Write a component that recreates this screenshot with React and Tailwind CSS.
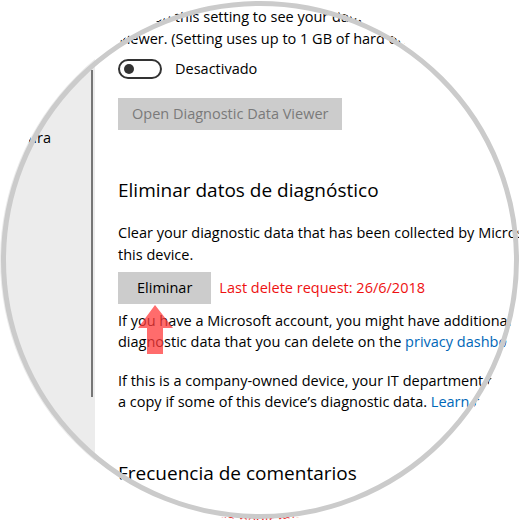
import React from 'react';

const font = { fontFamily: '"Open Sans", "Noto Sans", sans-serif' };

function Toggle() {
  return (
    <div className="flex items-center w-[44px] h-[20px] rounded-full border-2 border-[#333333]">
      <div className="ml-[4px] w-[10px] h-[10px] rounded-full bg-[#333333]" />
    </div>
  );
}

function GrayButton({ children, muted }) {
  return (
    <div
      className={`inline-flex items-center h-[32px] bg-[#cccccc] ${
        muted ? 'text-[#7a7a7a] px-[14px]' : 'text-black px-[19px]'
      }`}
    >
      {children}
    </div>
  );
}

export default function App() {
  return (
    <div className="w-[520px] h-[520px] bg-white relative" style={font}>
      <div className="w-[520px] h-[520px] rounded-full overflow-hidden flex bg-white">
        {/* sidebar */}
        <div className="w-[95px] shrink-0 bg-[#ececec] flex">
          <div className="w-[91px] pt-[127px] flex justify-end pr-[40px] overflow-hidden">
            <span className="whitespace-nowrap text-[14.5px] leading-[22px] text-black">Voz, entrada manuscrita y escritura</span>
          </div>
          <div className="w-[2px] mt-[70px] h-[327px] bg-[#767676]" />
        </div>

        {/* main */}
        <div className="flex-1 pl-[23px] pt-[6px] text-[14.5px] text-black whitespace-nowrap">
          <div className="leading-[22px]">
            <p>Turn on this setting to see your data in the Diagnostic Data</p>
            <p>Viewer. (Setting uses up to 1 GB of hard drive space.)</p>
          </div>

          <div className="mt-[9px] flex items-center gap-[13px] h-[20px]">
            <Toggle />
            <span>Desactivado</span>
          </div>

          <div className="mt-[19px]">
            <GrayButton muted>Open Diagnostic Data Viewer</GrayButton>
          </div>

          <h2 className="mt-[46px] text-[19px] leading-[28px]">Eliminar datos de diagnóstico</h2>

          <div className="mt-[18px] leading-[22px]">
            <p>Clear your diagnostic data that has been collected by Microsoft about</p>
            <p>this device.</p>
          </div>

          <div className="mt-[6px] flex items-center gap-[8px]">
            <GrayButton>Eliminar</GrayButton>
            <span className="text-[#ee1111]">Last delete request: 26/6/2018</span>
          </div>

          <div className="mt-[6px] leading-[21px]">
            <p>If you have a Microsoft account, you might have additional</p>
            <p>
              diagnostic data that you can delete on the{' '}
              <span className="text-[#0067b8]">privacy dashboard</span>.
            </p>
          </div>

          <div className="mt-[18px] leading-[21px]">
            <p>If this is a company-owned device, your IT department can delete</p>
            <p>
              a copy if some of this device’s diagnostic data.{' '}
              <span className="text-[#0067b8]">Learn more</span>
            </p>
          </div>

          <h2 className="mt-[47px] text-[19px] leading-[28px]">Frecuencia de comentarios</h2>
          <p className="mt-[22px] text-[#ee1111]">Windows debería pedir mis comentarios</p>
        </div>
      </div>

      {/* red arrow pointing at the button */}
      <svg className="absolute left-0 top-0 pointer-events-none" width="520" height="520">
        <polygon
          points="155,305 173,328 163,328 163,354 147,354 147,328 138,328"
          fill="#ff3b3b"
          fillOpacity="0.75"
        />
      </svg>

      {/* magnifier ring */}
      <div className="absolute inset-[1px] rounded-full border-[5px] border-[#cbcbcb] pointer-events-none" />
    </div>
  );
}
